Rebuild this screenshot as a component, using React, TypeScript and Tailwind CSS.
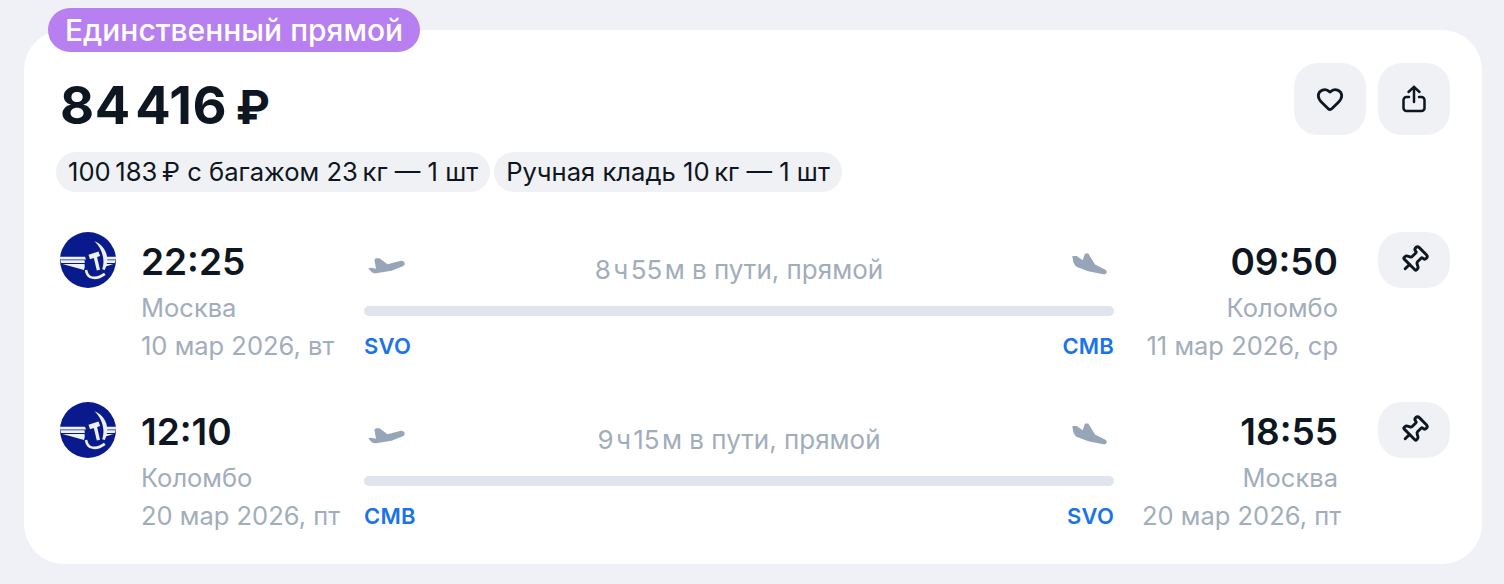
import React from "react";
import { Heart, Pin } from "lucide-react";

const segments = [
  {
    depart: "22:25",
    arrive: "09:50",
    from: "Москва",
    to: "Коломбо",
    fromDate: "10 мар 2026, вт",
    toDate: "11 мар 2026, ср",
    fromCode: "SVO",
    toCode: "CMB",
    duration: "8\u200Aч\u200A55\u200Aм в пути, прямой",
  },
  {
    depart: "12:10",
    arrive: "18:55",
    from: "Коломбо",
    to: "Москва",
    fromDate: "20 мар 2026, пт",
    toDate: "20 мар 2026, пт",
    fromCode: "CMB",
    toCode: "SVO",
    duration: "9\u200Aч\u200A15\u200Aм в пути, прямой",
  },
];

function AirlineLogo() {
  return (
    <svg viewBox="0 0 56 56" className="w-14 h-14 shrink-0">
      <circle cx="28" cy="28" r="28" fill="#091a8c" />
      {/* wings */}
      <g fill="#eef1f7">
        <path d="M0 24.800h25l1 2.600H.1zM.3 28.300H24.500l.3 2.700H1.200zM2.500 32H24.500l.3 2.400-.8 3.600z" />
        <path d="M56 24.800H44.500l.3 2.600h11.100zM55.700 28.300H45l-.3 2.700h10zM53.500 32h-9l-.5 3z" />
      </g>
      {/* sickle */}
      <path
        d="M34.400 9.300c7.500 2.800 12.800 9.800 12.800 18 0 4-1 7.500-2.400 10.700l-2.600-.8c.9-3 1.400-5.700 1.200-9.200-.5-7.500-4-14-9-18.700z"
        fill="#eef1f7"
      />
      {/* ring under the hammer */}
      <path
        d="M26 38c.7 3.800 2 5.800 4 6.900 4.200 1.800 10 .6 14.800-3"
        fill="none"
        stroke="#eef1f7"
        strokeWidth="2.600"
      />
      {/* hammer */}
      <path d="M28.500 22.800l10-3.400 1.600 4.600-3 1 2.900 12.700-3.200.8-3-12.500-3.800 1.300z" fill="#eef1f7" />
    </svg>
  );
}

function PlaneUp() {
  return (
    <svg viewBox="0 0 40 20" className="w-10 h-5">
      <path
        d="M1.300 12.300L4 11.800l5 1-1.500-8.300c-.2-1.500 1-2.500 2.200-2.300h2.800l8 6L33 5c2-.5 4 .5 4.600 1.800.4 1.500-.4 3-1.800 3.500l-11.300 4.400L9 17.300c-2 .2-3.800-.5-5-1.800z"
        fill="#97a5b8"
      />
    </svg>
  );
}

function PlaneDown() {
  return (
    <svg viewBox="0 0 38 24" className="w-[38px] h-6">
      <path
        d="M1.300 3h4.400l6 4.200L14 .5h3.300L24 11.500l10 5c1.500.8 2 2 1.700 3-.4 1.400-2 2-3.400 1.800L17.300 18.300 6 14c-1.500-.6-3-3-3.700-5z"
        fill="#97a5b8"
      />
    </svg>
  );
}

function ShareIcon() {
  return (
    <svg viewBox="0 0 28 28" className="w-7 h-7" fill="none" stroke="#0e1621" strokeWidth="2.500" strokeLinecap="round" strokeLinejoin="round">
      <path d="M14 17V1.800M8.500 7L14 1.800 19.500 7" />
      <path d="M9 12H6.500a3 3 0 0 0-3 3v8a3 3 0 0 0 3 3h15a3 3 0 0 0 3-3v-8a3 3 0 0 0-3-3H19" />
    </svg>
  );
}

function Segment({ s }: { s: (typeof segments)[number] }) {
  return (
    <div className="flex items-start">
      <AirlineLogo />
      <div className="w-[223px] ml-[25px] shrink-0 whitespace-nowrap">
        <div className="text-[37px] leading-[60px] font-semibold text-[#0e1621]">{s.depart}</div>
        <div className="text-[25.500px] leading-[32px] text-[#a2adbb]">{s.from}</div>
        <div className="text-[25.500px] leading-[32px] text-[#a2adbb] mt-[6px]">{s.fromDate}</div>
      </div>
      <div className="w-[750px] shrink-0">
        <div className="flex items-center justify-between h-[74px] pb-[8px]">
          <div className="pl-[3px] pt-0.5"><PlaneUp /></div>
          <div className="text-[26px] text-[#a2adbb] mt-2 whitespace-nowrap">{s.duration}</div>
          <div className="pr-[5px]"><PlaneDown /></div>
        </div>
        <div className="h-2.5 rounded-full bg-[#dfe4ed]"></div>
        <div className="flex justify-between text-[22px] leading-[28px] font-semibold text-[#1a73e8] mt-4 tracking-[0.2px]">
          <span>{s.fromCode}</span>
          <span>{s.toCode}</span>
        </div>
      </div>
      <div className="w-[196px] ml-7 shrink-0 text-right whitespace-nowrap">
        <div className="text-[37px] leading-[60px] font-semibold text-[#0e1621]">{s.arrive}</div>
        <div className="text-[25.500px] leading-[32px] text-[#a2adbb]">{s.to}</div>
        <div className="text-[25.500px] leading-[32px] text-[#a2adbb] mt-[6px]">{s.toDate}</div>
      </div>
      <button className="ml-10 w-[72px] h-14 rounded-[24px] bg-[#f0f1f4] flex items-center justify-center shrink-0">
        <Pin size={30} strokeWidth={2.3} color="#0e1621" className="rotate-45" />
      </button>
    </div>
  );
}

export default function App() {
  return (
    <div
      className="h-[584px] bg-[#eff1f6] pt-[30px] pl-6 pr-[22px] overflow-hidden"
      style={{ fontFamily: "Inter, 'Noto Sans', sans-serif" }}
    >
      <div className="relative bg-white rounded-[40px] h-[534px] pl-9 pr-8 pt-[33px]">
        <div className="absolute -top-[22px] left-6 h-11 px-[17px] rounded-full bg-[#b77fef] text-white text-[30px] leading-[44px] font-medium whitespace-nowrap">
          Единственный прямой
        </div>

        <div className="flex justify-between items-start h-[89px]">
          <div className="text-[52.500px] leading-[84px] font-bold text-[#0e1621] tracking-[0.5px] whitespace-nowrap">
            84{"\u200A"}416{"\u2009"}<span className="text-[46px]">₽</span>
          </div>
          <div className="flex gap-3">
            <button className="w-[72px] h-[72px] rounded-[24px] bg-[#f0f1f4] flex items-center justify-center">
              <Heart size={28} strokeWidth={2.4} color="#0e1621" />
            </button>
            <button className="w-[72px] h-[72px] rounded-[24px] bg-[#f0f1f4] flex items-center justify-center">
              <ShareIcon />
            </button>
          </div>
        </div>

        <div className="flex gap-1 -ml-1 text-[25.600px] leading-10 text-[#0e1621] whitespace-nowrap">
          <div className="h-10 px-3 rounded-[20px] bg-[#f0f1f4]">100{"\u2009"}183{"\u2009"}₽ с багажом 23{"\u2009"}кг — 1 шт</div>
          <div className="h-10 px-3 rounded-[20px] bg-[#f0f1f4]">Ручная кладь 10{"\u2009"}кг — 1 шт</div>
        </div>

        <div className="flex flex-col gap-10 mt-10">
          {segments.map((s) => (
            <Segment key={s.depart} s={s} />
          ))}
        </div>
      </div>
    </div>
  );
}
